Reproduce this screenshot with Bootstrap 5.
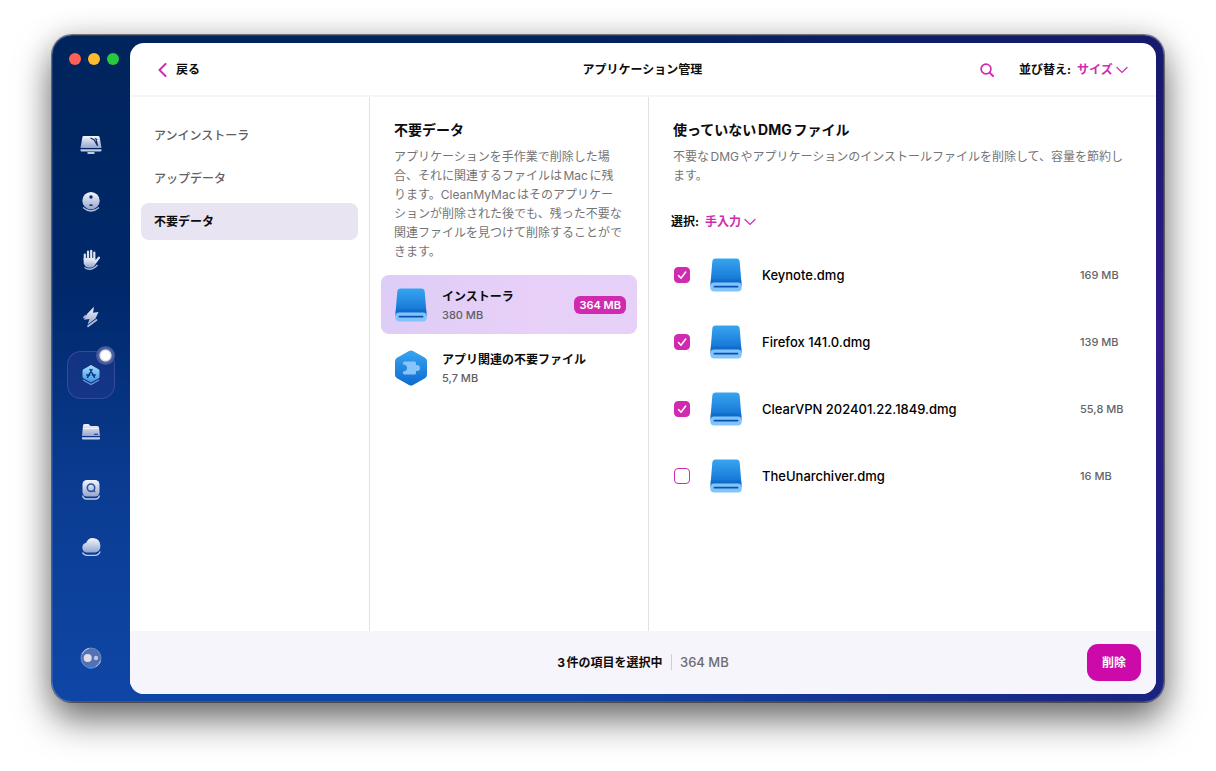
<!DOCTYPE html>
<html lang="ja">
<head>
<meta charset="utf-8">
<meta name="viewport" content="width=device-width, initial-scale=1">
<title>アプリケーション管理</title>
<link href="https://cdn.jsdelivr.net/npm/bootstrap@5.3.0/dist/css/bootstrap.min.css" rel="stylesheet">
<style>
  :root { --accent: #d02bb0; --muted: #747476; --line: #e2e2e4; }
  body { font-family: Inter, "Noto Sans CJK JP", sans-serif; font-size: 12px; line-height: 18px; color: #0c0c0e; background: #fff; padding: 35px 52px 69px; text-autospace: normal; }
  button, select, input { font: inherit; color: inherit; }
  .app-window {
    min-height: calc(100vh - 104px); border-radius: 20px; padding: 8px 8px 8px 0;
    background:
      radial-gradient(ellipse 30% 40% at 100% 45%, rgba(62,26,150,.7), rgba(62,26,150,0)),
      linear-gradient(90deg, rgba(30,22,115,0) 45%, rgba(30,22,115,.75) 100%),
      linear-gradient(180deg, #00245c 0%, #00286a 38%, #0a3b90 66%, #0f46a6 100%);
    box-shadow: inset 0 0 0 1px rgba(140,160,210,.2), 0 0 0 1px rgba(30,30,40,.55), 0 0 30px rgba(0,0,0,.14), 0 18px 36px rgba(0,0,0,.55);
  }
  .side { width: 78px; flex: none; padding-bottom: 12px; }
  .lights { gap: 7px; padding: 10px 0 0 17px; height: 78px; }
  .lights button { width: 12px; height: 12px; border: 0; border-radius: 50%; padding: 0; }
  .light-close { background: #fe5f57; }
  .light-min { background: #febb2e; }
  .light-zoom { background: #28c840; }
  .side-nav { margin-bottom: 63px; }
  .tile { width: 48px; height: 48px; border: 0; background: none; border-radius: 14px; padding: 0; position: relative; }
  .tile.current { background: rgba(50,60,150,.35); box-shadow: inset 0 0 0 1px rgba(110,120,200,.35); }
  .tile .dot { position: absolute; top: -5px; right: 0; width: 19px; height: 19px; border-radius: 50%; background: radial-gradient(closest-side, #fff 0 42%, #d5d6e3 60%, #5568a8 68%, #3d5098 100%); }
  .pane { border-radius: 14px; overflow: hidden; background: #fff; min-width: 0; }
  .topbar { display: grid; grid-template-columns: 1fr auto 1fr; height: 54px; border-bottom: 2px solid #f5f5f6; padding: 2px 28px 0 27px; }
  .topbar h1 { font-size: 12px; line-height: 18px; }
  .plain { border: 0; background: none; padding: 0; }
  .back { gap: 7px; }
  .find { margin-right: 19px; }
  .pick-row { gap: 6px; }
  .pick { border: 0; appearance: none; padding: 0 14px 0 0; color: var(--accent); font-weight: 600; background: url("data:image/svg+xml,%3Csvg xmlns='http://www.w3.org/2000/svg' viewBox='0 0 12 8'%3E%3Cpath d='M1 1.5l5 5 5-5' fill='none' stroke='%23d02bb0' stroke-width='1.2' stroke-linecap='round'/%3E%3C/svg%3E") right center / 12px 8px no-repeat; }
  .cats { width: 240px; flex: none; border-right: 1px solid var(--line); padding: 20px 11px; }
  .cats a { display: block; height: 37px; line-height: 37px; border-radius: 8px; padding: 0 13px; margin-bottom: 6px; color: #606063; font-weight: 500; text-decoration: none; }
  .cats a.current { background: #e8e4f1; color: #0c0c0e; font-weight: 700; }
  .junk { width: 279px; flex: none; border-right: 1px solid var(--line); padding: 23px 11px; }
  .junk .intro { padding: 0 13px; margin-bottom: 14px; }
  h2 { font-size: 14px; line-height: 20px; font-weight: 700; margin: 0 0 7px; }
  .intro p { line-height: 19px; color: var(--muted); margin: 0; }
  .kind { display: flex; align-items: center; width: 100%; height: 59px; border: 0; border-radius: 8px; background: none; padding: 0 11px 0 14px; text-align: left; margin-bottom: 4px; }
  .kind.current { background: linear-gradient(100deg, #ddcdf7, #e8d0f8 60%, #e7d1f9); }
  .kind-text { padding-top: 2px; }
  .kind small { display: block; font-size: 11px; color: #606064; font-weight: 500; }
  .kind .art { margin-right: 15px; }
  .size-tag { font-size: 11px; font-weight: 600; line-height: 18px; padding: 0 5px; border-radius: 6px; background: var(--accent); color: #fff; }
  .files { padding: 23px 0 0 24px; }
  .files .intro { padding-right: 24px; }
  .files .pick-row { margin: 28px 0 10px -2px; }
  .file-row { height: 67px; gap: 20px; }
  .file-row .form-check-input { width: 16px; height: 16px; margin: 0 0 0 1px; border: 1px solid var(--accent); border-radius: 4px; flex: none; }
  .file-row .form-check-input:checked { background: var(--accent) url("data:image/svg+xml,%3Csvg xmlns='http://www.w3.org/2000/svg' viewBox='0 0 14 14'%3E%3Cpath d='M3.500 7.500l2.500 2.700 4.700-6.200' fill='none' stroke='%23fff' stroke-width='1.500' stroke-linecap='round' stroke-linejoin='round'/%3E%3C/svg%3E") center / 14px 14px no-repeat; }
  .file-row label { font-size: 13px; font-weight: 500; color: #000; }
  .file-row .amount { width: 76px; flex: none; font-size: 11px; font-weight: 500; color: #646468; }
  .bottombar { display: grid; grid-template-columns: 1fr auto 1fr; height: 63px; background: #f6f5fb; padding: 0 15px; }
  .bottombar .total { font-size: 13px; color: #6c6c70; font-weight: 500; border-left: 1px solid #cfced6; padding-left: 8px; margin-left: 7px; }
  .delete { width: 54px; height: 37px; border: 0; border-radius: 11px; background: #cc0aa9; color: #fff; font-weight: 700; }
</style>
</head>
<body>
<svg width="0" height="0" class="position-absolute" aria-hidden="true">
  <defs>
    <linearGradient id="silver" x1="0" y1="0" x2="0" y2="1"><stop offset="0" stop-color="#f4f6fb"/><stop offset="1" stop-color="#96a5cd"/></linearGradient>
    <linearGradient id="blue" x1="0" y1="0" x2="0" y2="1"><stop offset="0" stop-color="#38a5f0"/><stop offset="1" stop-color="#0d6bcf"/></linearGradient>
    <linearGradient id="sky" x1="0" y1="0" x2="0" y2="1"><stop offset="0" stop-color="#a5e2ff"/><stop offset="1" stop-color="#3d93e6"/></linearGradient>
    <symbol id="drive" viewBox="0 0 32 34">
      <path d="M5.800.5h20.400a3.500 3.500 0 0 1 3.500 3.200L31.700 28H.3L2.300 3.700A3.500 3.500 0 0 1 5.800.5z" fill="url(#blue)"/>
      <path d="M.8 21.500h30.400l.3 4H.5z" fill="#0b63c4" opacity=".5"/>
      <path d="M4 24.500h24a3.500 3.500 0 0 1 3.700 3.500v1.500a4 4 0 0 1-4 4H4.300a4 4 0 0 1-4-4V28A3.500 3.500 0 0 1 4 24.500z" fill="#81c4fb"/>
      <path d="M4.500 28.700h23" stroke="#0a50ae" stroke-width="1.800" stroke-linecap="round"/>
    </symbol>
  </defs>
</svg>

<div class="app-window d-flex">
  <aside class="side d-flex flex-column align-items-stretch">
    <div class="lights d-flex">
      <button class="light-close" aria-label="閉じる"></button>
      <button class="light-min" aria-label="しまう"></button>
      <button class="light-zoom" aria-label="拡大"></button>
    </div>
    <nav class="side-nav d-flex flex-column align-items-center justify-content-between flex-grow-1">
      <button class="tile" aria-label="スマートケア"><svg width="22" height="20" viewBox="0 0 22 20"><path d="M3.800 1h14.400a1.500 1.500 0 0 1 1.400 1.100L21.500 13H.5L2.400 2.100A1.500 1.500 0 0 1 3.800 1z" fill="url(#silver)"/><path d="M10.500 3l3.500 1.800 3.600 6-1.400-5.600M15 3.500l2.200 1.200" fill="none" stroke="#0a2a68" stroke-width="1.200"/><path d="M.5 14.300h21v1.200a1 1 0 0 1-1 1h-19a1 1 0 0 1-1-1zM7.500 17h7v2h-7z" fill="#c0cae2"/></svg></button>
      <button class="tile" aria-label="クリーンアップ"><svg width="20" height="22" viewBox="0 0 20 22"><circle cx="10" cy="9.700" r="8.700" fill="url(#silver)"/><circle cx="10" cy="6" r="1.700" fill="#0a2a68"/><path d="M8 14.300q2 1.600 4 0-.7-1-2-1t-2 1z" fill="#0a2a68"/><path d="M2 16.500q8 7 16 0" fill="none" stroke="#b2bddb" stroke-width="1.300"/></svg></button>
      <button class="tile" aria-label="保護"><svg width="20" height="22" viewBox="0 0 20 22"><path d="M2.700 9v5.500q1.500 4.200 6 4.200 4 0 5.800-3.500l2.700-4.500-3 .5V9z" fill="url(#silver)"/><path d="M3.800 11V5.500M7 10V2.700M10.200 10V1.800M13.300 11V3.500M14.500 13l3.400-4.300" fill="none" stroke="#dfe4f1" stroke-width="2.200" stroke-linecap="round"/><path d="M3.500 18.500q6.500 4.500 13-2.500" fill="none" stroke="#b2bddb" stroke-width="1.300"/></svg></button>
      <button class="tile" aria-label="パフォーマンス"><svg width="18" height="22" viewBox="0 0 18 22"><path d="M12 .8l-1 6 5.500-.8-3 6.500-8 6.200 2-5.700-5.500.8L5 8z" fill="url(#silver)"/><path d="M6 20.300l8.500-6.300M2 11.500l1.200-1.500" fill="none" stroke="#b2bddb" stroke-width="1.700" stroke-linecap="round"/></svg></button>
      <button class="tile current" aria-label="アプリケーション" aria-current="page"><svg width="20" height="22" viewBox="0 0 20 22"><path d="M10 1l7.500 4.300a2 2 0 0 1 1 1.700v5.500a2 2 0 0 1-1 1.700L10 18.500l-7.500-4.300a2 2 0 0 1-1-1.700V7a2 2 0 0 1 1-1.700z" fill="url(#sky)"/><path d="M9 5.500l4.500 7.800M11 5.500L6.500 13.300M5.800 11h3M11.500 11h2.700" stroke="#0b3480" stroke-width="1.500" stroke-linecap="round"/><path d="M2 16l8 4.500 8-4.500" fill="none" stroke="#7197d8" stroke-width="1.300"/></svg><span class="dot"></span></button>
      <button class="tile" aria-label="マイクラッター"><svg width="20" height="18" viewBox="0 0 20 18"><path d="M2 2.500A1.500 1.500 0 0 1 3.500 1h4l2 2h7A1.500 1.500 0 0 1 18 4.500L19 13H1z" fill="url(#silver)"/><path d="M2 5.500h16" stroke="#fff" opacity=".7"/><path d="M13 11.300h4" stroke="#26498f" stroke-width="1.200"/><path d="M1 14.300h18v1.200a1 1 0 0 1-1 1H2a1 1 0 0 1-1-1z" fill="#c5d0ee"/></svg></button>
      <button class="tile" aria-label="スペースレンズ"><svg width="20" height="22" viewBox="0 0 20 22"><rect x="1.500" y="1" width="17" height="16.500" rx="4.500" fill="url(#silver)"/><circle cx="10" cy="8.700" r="3.700" fill="none" stroke="#2a52a0" stroke-width="1.600"/><path d="M12.700 11.500l1.300 1.500" stroke="#2a52a0" stroke-width="1.600"/><path d="M1.500 16.500q1 3.500 4 3.500h9q3 0 4-3.500" fill="none" stroke="#c0cced" stroke-width="1.300"/></svg></button>
      <button class="tile" aria-label="クラウド"><svg width="20" height="20" viewBox="0 0 20 20"><path d="M5.500 15.500a5 5 0 0 1-.3-9.800A7.300 7.300 0 0 1 19.300 8v1.800A5.500 5.500 0 0 1 13.700 15.500z" fill="url(#silver)"/><path d="M1.500 15.500q1.500 2.800 4.500 2.800h8q3.600 0 5.200-3.800" fill="none" stroke="#c0cced" stroke-width="1.300"/></svg></button>
    </nav>
    <div class="d-flex justify-content-center">
      <button class="tile" aria-label="アシスタント"><svg width="22" height="22" viewBox="0 0 22 22"><circle cx="11" cy="11" r="10" fill="#5272b5" stroke="#6c8cc9"/><path d="M2 7a10 10 0 0 1 7-5.800M20.500 14a10 10 0 0 1-5 5.900" fill="none" stroke="#b9c6e6"/><path d="M8 20.500a10 10 0 0 0 5.500.2" fill="none" stroke="#17a3f5" stroke-width="1.200"/><circle cx="7.700" cy="11" r="4" fill="#e0dde9"/><circle cx="16" cy="11" r="2.200" fill="#c3c5dd"/></svg></button>
    </div>
  </aside>

  <div class="pane d-flex flex-column flex-grow-1">
    <header class="topbar align-items-center">
      <div><button class="plain back d-flex align-items-center fw-bold"><svg width="12" height="14" viewBox="0 0 12 14"><path d="M8.500 1L2.500 7l6 6" fill="none" stroke="#d02bb0" stroke-width="2" stroke-linecap="round" stroke-linejoin="round"/></svg>戻る</button></div>
      <h1 class="m-0 fw-bold">アプリケーション管理</h1>
      <div class="pick-row d-flex align-items-center justify-content-end">
        <button class="plain find d-flex" aria-label="検索"><svg width="14" height="14" viewBox="0 0 14 14"><circle cx="6" cy="6" r="4.900" fill="none" stroke="#d02bb0" stroke-width="1.700"/><path d="M9.600 9.600L13 13" stroke="#d02bb0" stroke-width="2" stroke-linecap="round"/></svg></button>
        <label for="sort" class="fw-bold">並び替え:</label>
        <select id="sort" class="pick"><option>サイズ</option></select>
      </div>
    </header>

    <div class="d-flex flex-grow-1">
      <nav class="cats">
        <a href="#uninstaller">アンインストーラ</a>
        <a href="#updater">アップデータ</a>
        <a href="#junk" class="current" aria-current="page">不要データ</a>
      </nav>

      <section class="junk">
        <div class="intro">
          <h2>不要データ</h2>
          <p>アプリケーションを手作業で削除した場合、それに関連するファイルはMacに残ります。CleanMyMacはそのアプリケーションが削除された後でも、残った不要な関連ファイルを見つけて削除することができます。</p>
        </div>
        <button class="kind current">
          <svg class="art" width="32" height="34"><use href="#drive"/></svg>
          <span class="kind-text flex-grow-1"><b>インストーラ</b><small>380 MB</small></span>
          <span class="size-tag">364 MB</span>
        </button>
        <button class="kind">
          <svg class="art" width="32" height="36" viewBox="0 0 32 36"><path d="M14 1.100a4 4 0 0 1 4 0l12 6.700a4 4 0 0 1 2 3.500v13.400a4 4 0 0 1-2 3.500l-12 6.700a4 4 0 0 1-4 0L2 28.200a4 4 0 0 1-2-3.500V11.300a4 4 0 0 1 2-3.500z" fill="url(#blue)"/><path d="M9.500 11.500h10a1.500 1.500 0 0 1 1.500 1.500v2h1a3 3 0 0 1 0 6h-1v2a1.500 1.500 0 0 1-1.500 1.500h-10A1.500 1.500 0 0 1 8 23v-1.500q4-.3 4-3.500t-4-3.500V13a1.500 1.500 0 0 1 1.500-1.500z" fill="#86c5fa"/></svg>
          <span class="kind-text flex-grow-1"><b>アプリ関連の不要ファイル</b><small>5,7 MB</small></span>
        </button>
      </section>

      <main class="files flex-grow-1">
        <div class="intro">
          <h2>使っていないDMGファイル</h2>
          <p>不要なDMGやアプリケーションのインストールファイルを削除して、容量を節約します。</p>
        </div>
        <div class="pick-row d-flex align-items-center">
          <label for="pick" class="fw-bold">選択:</label>
          <select id="pick" class="pick"><option>手入力</option></select>
        </div>
        <ul class="list-unstyled mb-0">
          <li class="file-row d-flex align-items-center"><input class="form-check-input" type="checkbox" id="f1" checked><svg width="32" height="34"><use href="#drive"/></svg><label for="f1" class="flex-grow-1">Keynote.dmg</label><span class="amount">169 MB</span></li>
          <li class="file-row d-flex align-items-center"><input class="form-check-input" type="checkbox" id="f2" checked><svg width="32" height="34"><use href="#drive"/></svg><label for="f2" class="flex-grow-1">Firefox 141.0.dmg</label><span class="amount">139 MB</span></li>
          <li class="file-row d-flex align-items-center"><input class="form-check-input" type="checkbox" id="f3" checked><svg width="32" height="34"><use href="#drive"/></svg><label for="f3" class="flex-grow-1">ClearVPN 202401.22.1849.dmg</label><span class="amount">55,8 MB</span></li>
          <li class="file-row d-flex align-items-center"><input class="form-check-input" type="checkbox" id="f4"><svg width="32" height="34"><use href="#drive"/></svg><label for="f4" class="flex-grow-1">TheUnarchiver.dmg</label><span class="amount">16 MB</span></li>
        </ul>
      </main>
    </div>

    <footer class="bottombar align-items-center">
      <span></span>
      <div><b>3件の項目を選択中</b><span class="total">364 MB</span></div>
      <div class="text-end"><button class="delete">削除</button></div>
    </footer>
  </div>
</div>
<script src="https://cdn.jsdelivr.net/npm/bootstrap@5.3.0/dist/js/bootstrap.bundle.min.js"></script>
</body>
</html>
